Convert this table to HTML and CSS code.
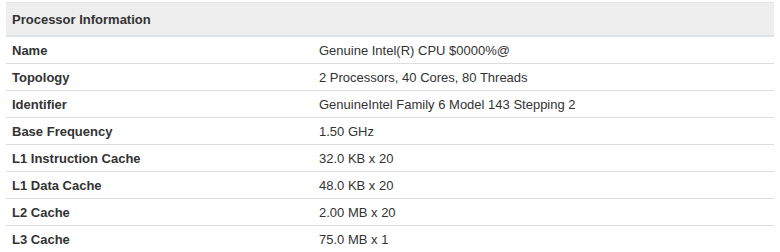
FILE: index.html
```html
<!DOCTYPE html>
<html>
<head>
<meta charset="utf-8">
<link rel="stylesheet" href="styles.css">
</head>
<body>
<table class="info">
  <colgroup>
    <col class="col-name">
    <col class="col-value">
  </colgroup>
  <thead>
    <tr><th colspan="2">Processor Information</th></tr>
  </thead>
  <tbody>
    <tr><td class="name">Name</td><td class="value">Genuine Intel(R) CPU $0000%@</td></tr>
    <tr><td class="name">Topology</td><td class="value">2 Processors, 40 Cores, 80 Threads</td></tr>
    <tr><td class="name">Identifier</td><td class="value">GenuineIntel Family 6 Model 143 Stepping 2</td></tr>
    <tr><td class="name">Base Frequency</td><td class="value">1.50 GHz</td></tr>
    <tr><td class="name">L1 Instruction Cache</td><td class="value">32.0 KB x 20</td></tr>
    <tr><td class="name">L1 Data Cache</td><td class="value">48.0 KB x 20</td></tr>
    <tr><td class="name">L2 Cache</td><td class="value">2.00 MB x 20</td></tr>
    <tr><td class="name">L3 Cache</td><td class="value">75.0 MB x 1</td></tr>
  </tbody>
</table>
</body>
</html>
```
FILE: styles.css
```css
html, body {
  margin: 0;
  padding: 0;
  background: #ffffff;
}
body {
  padding: 2px 6px 0 6px;
  font-family: "Liberation Sans", Arial, sans-serif;
  font-size: 13px;
  color: #333333;
}
.info {
  width: 768px;
  border-collapse: collapse;
  table-layout: fixed;
}
.col-name {
  width: 307px;
}
.info th {
  text-align: left;
  background: #eeeeee;
  border-top: 1px solid #e6e6e6;
  border-bottom: 2px solid #dde2e6;
  height: 32px;
  padding: 0 6px;
  font-weight: bold;
  vertical-align: middle;
}
.info td {
  height: 26px;
  padding: 0 6px;
  border-bottom: 1px solid #dddddd;
  vertical-align: middle;
}
.info td.name {
  font-weight: bold;
}
.info td.value {
  font-weight: normal;
}
```
